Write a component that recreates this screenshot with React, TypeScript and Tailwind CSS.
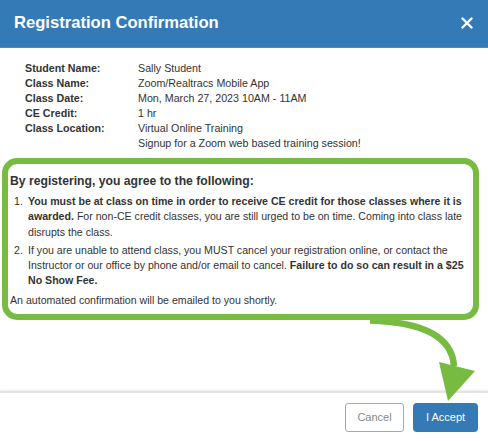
import React from "react";

const rows: [string, string][] = [
  ["Student Name:", "Sally Student"],
  ["Class Name:", "Zoom/Realtracs Mobile App"],
  ["Class Date:", "Mon, March 27, 2023 10AM - 11AM"],
  ["CE Credit:", "1 hr"],
  ["Class Location:", "Virtual Online Training"],
  ["", "Signup for a Zoom web based training session!"],
];

export default function App() {
  return (
    <div className="relative w-[488px] h-[441px] bg-white overflow-hidden font-['Liberation_Sans',Arial,Helvetica,sans-serif] text-[#333]">
      <header className="h-[48px] bg-[#337ab7] border-b border-[#4d8cc5] flex items-center justify-between pl-[14px] pr-[15px]">
        <h1 className="text-white font-bold text-[16.6px] leading-none">Registration Confirmation</h1>
        <svg width="12" height="12" viewBox="0 0 12 12" className="mt-[-1px]">
          <path d="M1.5 1.5 L10.5 10.5 M10.5 1.5 L1.5 10.5" stroke="white" strokeWidth="2.4" strokeLinecap="round" />
        </svg>
      </header>

      <div className="h-[343px] pt-[12.5px]">
        <div className="grid grid-cols-[113px_1fr] pl-[25px] text-[10.7px] leading-[15px]">
          {rows.map(([l, v], i) => (
            <React.Fragment key={i}>
              <div className="font-bold">{l}</div>
              <div>{v}</div>
            </React.Fragment>
          ))}
        </div>

        <div className="mt-[7.5px] ml-[2px] w-[477px] h-[162px] border-[6px] border-[#77bb41] rounded-[15px] pt-[10px] pl-[2px] pr-[1px] text-[10.6px]">
          <div className="font-bold text-[12.2px] leading-[15px]">By registering, you agree to the following:</div>
          <ol className="mt-[5px] leading-[15.3px] list-none">
            <li className="flex">
              <span className="w-[18px] shrink-0 pl-[4px]">1.</span>
              <span>
                <b>You must be at class on time in order to receive CE credit for those classes where it is awarded.</b>{" "}
                For non-CE credit classes, you are still urged to be on time. Coming into class late disrupts the class.
              </span>
            </li>
            <li className="flex mt-[3px]">
              <span className="w-[18px] shrink-0 pl-[4px]">2.</span>
              <span>
                If you are unable to attend class, you MUST cancel your registration online, or contact the Instructor or our office by phone and/or email to cancel.{" "}
                <b>Failure to do so can result in a $25 No Show Fee.</b>
              </span>
            </li>
          </ol>
          <div className="mt-[4px] leading-[15px]">An automated confirmation will be emailed to you shortly.</div>
        </div>
      </div>

      <div className="h-[2px] bg-[#e3e3e3] shadow-[0_-1px_2px_rgba(0,0,0,0.08)]" />

      <footer className="flex justify-end gap-[9px] pt-[10px] pr-[10px]">
        <button className="w-[59px] h-[29px] rounded-[3px] border border-[#a9a9a9] bg-white text-[#888] text-[11px]">Cancel</button>
        <button className="w-[65px] h-[29px] rounded-[4px] bg-[#337ab7] text-white text-[11px]">I Accept</button>
      </footer>

      <svg className="absolute left-0 top-0 pointer-events-none" width="488" height="441" viewBox="0 0 488 441">
        <path d="M370 320.5 C420 322, 452 335, 454 366" stroke="#77bb41" strokeWidth="6.5" fill="none" />
        <polygon points="439,362 475,371 448,401" fill="#77bb41" />
      </svg>
    </div>
  );
}
